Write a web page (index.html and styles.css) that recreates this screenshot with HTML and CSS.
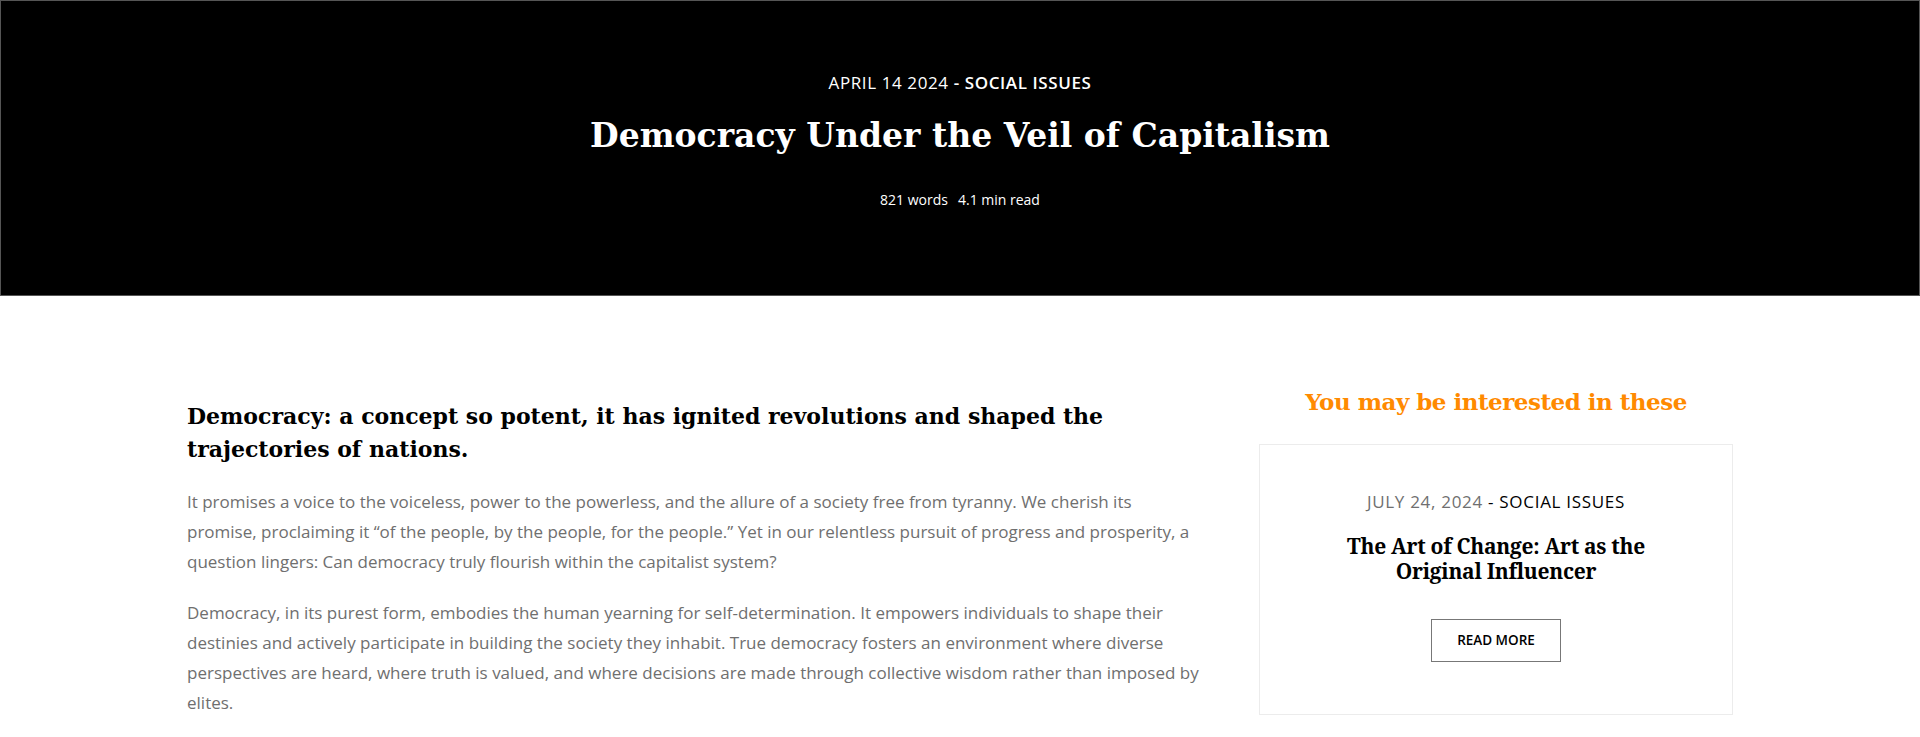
FILE: index.html
```html
<!DOCTYPE html>
<html lang="en">

<head>
    <meta charset="utf-8">
    <meta name="viewport" content="width=device-width, initial-scale=1.0">
    <title>Democracy Under the Veil of Capitalism</title>
    <link rel="stylesheet" href="styles.css">
</head>

<body>
    <header class="hero">
        <p class="hero__meta">APRIL 14 2024 <strong>- SOCIAL ISSUES</strong></p>
        <h1 class="hero__title">Democracy Under the Veil of Capitalism</h1>
        <p class="hero__stats"><span>821 words</span><span>4.1 min read</span></p>
    </header>

    <main class="layout">
        <article class="post">
            <h2 class="post__lead">Democracy: a concept so potent, it has ignited revolutions and shaped the trajectories of nations.</h2>
            <p class="post__text">It promises a voice to the voiceless, power to the powerless, and the allure of a society free from tyranny. We cherish its promise, proclaiming it &ldquo;of the people, by the people, for the people.&rdquo; Yet in our relentless pursuit of progress and prosperity, a question lingers: Can democracy truly flourish within the capitalist system?</p>
            <p class="post__text">Democracy, in its purest form, embodies the human yearning for self-determination. It empowers individuals to shape their destinies and actively participate in building the society they inhabit. True democracy fosters an environment where diverse perspectives are heard, where truth is valued, and where decisions are made through collective wisdom rather than imposed by elites.</p>
        </article>

        <aside class="related">
            <h3 class="related__title">You may be interested in these</h3>
            <div class="card">
                <p class="card__meta"><span class="card__date">JULY 24, 2024</span> - <strong>SOCIAL ISSUES</strong></p>
                <h4 class="card__title">The Art of Change: Art as the Original Influencer</h4>
                <a class="card__button" href="#">READ MORE</a>
            </div>
        </aside>
    </main>
</body>

</html>
```

FILE: styles.css
```css
body {
    --color-accent: #ff8a00;
    --color-text: #6f6f6f;
    --color-border: #ececec;
    margin: 0;
    background: #ffffff;
    color: #000000;
    font-family: 'Open Sans', sans-serif;
}

.hero {
    box-sizing: border-box;
    height: 296px;
    padding-top: 70px;
    border: 1px solid #555555;
    background: #000000;
    color: #ffffff;
    text-align: center;
}

.hero__meta {
    margin: 0;
    font-size: 17px;
    line-height: 24px;
    letter-spacing: 0.6px;
}

.hero__meta strong {
    font-weight: 600;
}

.hero__title {
    margin: 20px 0 0;
    font: 700 33px/42px 'DejaVu Serif', serif;
}

.hero__stats {
    display: flex;
    justify-content: center;
    gap: 10px;
    margin: 33px 0 0;
    font-size: 14px;
    line-height: 20px;
}

.layout {
    display: grid;
    grid-template-columns: 1fr 474px;
    gap: 60px;
    width: 1546px;
    margin: 0 auto;
    padding-top: 90px;
}

.post__lead {
    margin: 14px 0 21px;
    font: 700 22px/33px 'DejaVu Serif', serif;
}

.post__text {
    margin: 0 0 22px;
    font-size: 17px;
    line-height: 29.75px;
    color: var(--color-text);
}

.related__title {
    margin: 0 0 27px;
    font: 700 23px/31px 'DejaVu Serif', serif;
    letter-spacing: -0.5px;
    color: var(--color-accent);
    text-align: center;
}

.card {
    padding: 45px 70px 52px;
    border: 1px solid var(--color-border);
    text-align: center;
}

.card__meta {
    margin: 0;
    font-size: 17px;
    line-height: 24px;
    letter-spacing: 0.7px;
}

.card__date {
    color: var(--color-text);
}

.card__meta strong {
    font-weight: 500;
}

.card__title {
    margin: 20px 0 35px;
    font: 700 21px/25px 'Noto Serif', 'DejaVu Serif', serif;
    letter-spacing: -0.3px;
}

.card__button {
    display: inline-block;
    padding: 11px 25px;
    border: 1px solid #777777;
    font-size: 13.5px;
    font-weight: 600;
    line-height: 19px;
    color: #000000;
    text-decoration: none;
}
```
